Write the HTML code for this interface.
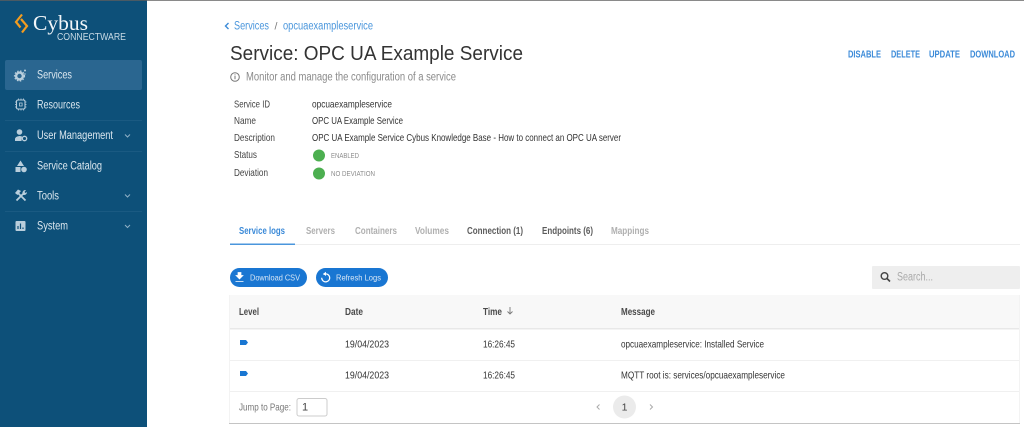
<!DOCTYPE html>
<html lang="en">
<head>
<meta charset="utf-8">
<title>Service: OPC UA Example Service</title>
<style>
html,body{margin:0;padding:0;width:1024px;height:427px;overflow:hidden;background:#fff}
svg{display:block;position:absolute;left:0;top:0;filter:blur(.3px)}
text{font-family:"Liberation Sans",sans-serif;font-size:10px}
.n{fill:#dbe7ef;font-size:11.5px}
.k{fill:#444;font-size:10.5px}
.v{fill:#333;font-size:10.5px}
.b{fill:#4a96dc;font-size:11.5px}
.a{fill:#3b8ad8;font-size:10px;font-weight:bold}
.t{font-size:10px;font-weight:bold;fill:#b0b0b0}
.d{font-size:10px;font-weight:bold;fill:#5c5c5c}
.h{font-size:10.5px;font-weight:bold;fill:#4a4a4a}
.c{fill:#d8e6f5;font-size:8.5px}
.s{fill:#8c8c8c;font-size:7.5px}
</style>
</head>
<body>
<svg width="1024" height="427" viewBox="0 0 1024 427" xmlns="http://www.w3.org/2000/svg">
<rect width="1024" height="427" fill="#fff"/>
<rect width="1024" height="1" fill="#8a8a8a"/>
<rect x="0" y="0" width="147" height="427" fill="#0d5079"/>
<rect x="0" y="0" width="147" height="1" fill="#4a5a64"/>

<!-- logo -->
<path d="M22 14.500 L16 22 L20.500 27.500" fill="none" stroke="#f39c1f" stroke-width="2.200"/>
<path d="M21 19 L27 26 L22 32.500" fill="none" stroke="#f39c1f" stroke-width="2.200"/>
<text x="33" y="30" textLength="55" lengthAdjust="spacingAndGlyphs" style="font-family:'Liberation Serif',serif;font-size:21.500px;fill:#f2f6f9">Cybus</text>
<text x="57" y="40" textLength="69" lengthAdjust="spacingAndGlyphs" style="font-size:10.500px;fill:#c9dbe6">CONNECTWARE</text>

<!-- nav -->
<rect x="5" y="60" width="137" height="30" rx="2" fill="#2a6690"/>
<rect x="5" y="120" width="137" height="1" fill="#1a5a82"/>
<rect x="5" y="151" width="137" height="1" fill="#1a5a82"/>
<rect x="5" y="211" width="137" height="1" fill="#1a5a82"/>

<!-- services icon -->
<circle cx="19.500" cy="76" r="3.400" fill="none" stroke="#b9cedc" stroke-width="2.400"/>
<circle cx="19.500" cy="76" r="5" fill="none" stroke="#b9cedc" stroke-width="1.200" stroke-dasharray="1.500 1.500"/>
<circle cx="25" cy="70.500" r="1" fill="#b9cedc"/><circle cx="25" cy="74" r=".7" fill="#b9cedc"/>
<!-- resources icon -->
<rect x="16.500" y="100" width="8.500" height="9" rx="1.500" fill="none" stroke="#b9cedc" stroke-width="1.100"/>
<rect x="19.500" y="103" width="2.600" height="3" fill="none" stroke="#b9cedc" stroke-width=".8"/>
<path d="M18.500 98.500v1.500M21 98.500v1.500M23.500 98.500v1.500M18.500 109v1.500M21 109v1.500M23.500 109v1.500M15 102h1.500M15 104.500h1.500M15 107h1.500M25 102h1.500M25 104.500h1.500M25 107h1.500" stroke="#b9cedc" stroke-width=".8"/>
<!-- user icon -->
<circle cx="19.500" cy="132" r="2.800" fill="#b9cedc"/>
<path d="M15 141v-2c0-2 3-3 5-3l2 .5-.5 4.500z" fill="#b9cedc"/>
<circle cx="24.500" cy="138.500" r="2.200" fill="none" stroke="#b9cedc" stroke-width="1.300"/>
<!-- catalog icon -->
<path d="M20.500 160.500l3.500 5.500h-7z" fill="#b9cedc"/>
<rect x="15.500" y="167" width="5" height="5" fill="#b9cedc"/>
<circle cx="24" cy="169.500" r="2.800" fill="#b9cedc"/>
<!-- tools icon -->
<path d="M16.500 200.500l8-8M25.500 200.500l-7.500-7.500" fill="none" stroke="#b9cedc" stroke-width="1.800"/>
<path d="M15 193l3-3.500 3 1.500-3.500 4zM22.500 193.500a3 3 0 0 1 3.500-3.500l-1.500 2 1 1 1.500-1a3 3 0 0 1-3.500 3z" fill="#b9cedc"/>
<!-- system icon -->
<rect x="15.500" y="221" width="10" height="10" rx="1" fill="#b9cedc"/>
<path d="M18 229v-3M20.500 229v-5.500M23 229v-1.500" stroke="#0d5079" stroke-width="1.200"/>

<text class="n" x="37" y="78.500" textLength="35" lengthAdjust="spacingAndGlyphs">Services</text>
<text class="n" x="37" y="108.500" textLength="43" lengthAdjust="spacingAndGlyphs">Resources</text>
<text class="n" x="37" y="139" textLength="76" lengthAdjust="spacingAndGlyphs">User Management</text>
<text class="n" x="37" y="169.500" textLength="65" lengthAdjust="spacingAndGlyphs">Service Catalog</text>
<text class="n" x="37" y="199.500" textLength="22" lengthAdjust="spacingAndGlyphs">Tools</text>
<text class="n" x="37" y="229.500" textLength="31" lengthAdjust="spacingAndGlyphs">System</text>
<path d="M125 134.500l2.500 2.500 2.500-2.500M125 194.500l2.500 2.500 2.500-2.500M125 225l2.500 2.500 2.500-2.500" fill="none" stroke="#8fb0c6" stroke-width="1"/>

<!-- breadcrumb -->
<path d="M228.500 23l-3 3 3 3" fill="none" stroke="#3b8ad8" stroke-width="1.400"/>
<text class="b" x="234" y="29.500" textLength="35" lengthAdjust="spacingAndGlyphs">Services</text>
<text x="274.500" y="29.500" style="fill:#777;font-size:10.500px">/</text>
<text class="b" x="283" y="29.500" textLength="90" lengthAdjust="spacingAndGlyphs">opcuaexampleservice</text>

<!-- title -->
<text x="230" y="60" textLength="293" lengthAdjust="spacingAndGlyphs" style="font-size:20.500px;fill:#333">Service: OPC UA Example Service</text>
<circle cx="235" cy="77" r="4.300" fill="none" stroke="#777" stroke-width="1"/>
<rect x="234.500" y="76" width="1" height="3.200" fill="#777"/><rect x="234.500" y="74.400" width="1" height="1" fill="#777"/>
<text x="246" y="80.500" textLength="210" lengthAdjust="spacingAndGlyphs" style="font-size:11.500px;fill:#8a8a8a">Monitor and manage the configuration of a service</text>

<!-- actions -->
<text class="a" x="848" y="57.500" textLength="33" lengthAdjust="spacingAndGlyphs">DISABLE</text>
<text class="a" x="891" y="57.500" textLength="29" lengthAdjust="spacingAndGlyphs">DELETE</text>
<text class="a" x="929" y="57.500" textLength="31" lengthAdjust="spacingAndGlyphs">UPDATE</text>
<text class="a" x="970" y="57.500" textLength="45" lengthAdjust="spacingAndGlyphs">DOWNLOAD</text>

<!-- details -->
<text class="k" x="234" y="107.500" textLength="36" lengthAdjust="spacingAndGlyphs">Service ID</text>
<text class="k" x="234" y="124" textLength="22" lengthAdjust="spacingAndGlyphs">Name</text>
<text class="k" x="234" y="141" textLength="41" lengthAdjust="spacingAndGlyphs">Description</text>
<text class="k" x="234" y="158" textLength="23" lengthAdjust="spacingAndGlyphs">Status</text>
<text class="k" x="234" y="176" textLength="34" lengthAdjust="spacingAndGlyphs">Deviation</text>
<text class="v" x="312" y="107.500" textLength="80" lengthAdjust="spacingAndGlyphs">opcuaexampleservice</text>
<text class="v" x="312" y="124" textLength="91" lengthAdjust="spacingAndGlyphs">OPC UA Example Service</text>
<text class="v" x="312" y="141" textLength="309" lengthAdjust="spacingAndGlyphs">OPC UA Example Service Cybus Knowledge Base - How to connect an OPC UA server</text>
<circle cx="319" cy="155.500" r="6" fill="#4caf50"/>
<circle cx="319" cy="173.500" r="6" fill="#4caf50"/>
<text class="s" x="331" y="158" textLength="28" lengthAdjust="spacingAndGlyphs">ENABLED</text>
<text class="s" x="331" y="176" textLength="44" lengthAdjust="spacingAndGlyphs">NO DEVIATION</text>

<!-- tabs -->
<text class="t" x="239" y="234" textLength="46" lengthAdjust="spacingAndGlyphs" style="fill:#3b8ad8">Service logs</text>
<text class="t" x="306" y="234" textLength="29" lengthAdjust="spacingAndGlyphs">Servers</text>
<text class="t" x="355" y="234" textLength="42" lengthAdjust="spacingAndGlyphs">Containers</text>
<text class="t" x="415" y="234" textLength="34" lengthAdjust="spacingAndGlyphs">Volumes</text>
<text class="d" x="467" y="234" textLength="56" lengthAdjust="spacingAndGlyphs">Connection (1)</text>
<text class="d" x="542" y="234" textLength="51" lengthAdjust="spacingAndGlyphs">Endpoints (6)</text>
<text class="t" x="611" y="234" textLength="38" lengthAdjust="spacingAndGlyphs">Mappings</text>
<rect x="230" y="244" width="790" height="1" fill="#eee"/>
<rect x="230" y="243.500" width="65" height="1.500" fill="#4a96dc"/>

<!-- buttons -->
<rect x="230" y="268" width="77" height="19" rx="9.500" fill="#1976d2"/>
<rect x="316" y="268" width="72" height="19" rx="9.500" fill="#1976d2"/>
<path d="M238 272.500h3v3h2l-3.500 3.500-3.500-3.500h2zM235.500 281.500h8" fill="#fff" stroke="#fff" stroke-width=".7"/>
<text class="c" x="250" y="280.500" textLength="50" lengthAdjust="spacingAndGlyphs">Download CSV</text>
<path d="M323.500 274.500a4 4 0 1 1-1.800 3.300" fill="none" stroke="#fff" stroke-width="1.200"/>
<path d="M326 271.800v4.200l-3-2.100z" fill="#fff"/>
<text class="c" x="336" y="280.500" textLength="45" lengthAdjust="spacingAndGlyphs">Refresh Logs</text>

<!-- search -->
<rect x="872" y="266" width="148" height="23" rx="1" fill="#eee"/>
<circle cx="884.500" cy="276" r="3.300" fill="none" stroke="#444" stroke-width="1.400"/>
<path d="M887 278.500l3 3" stroke="#444" stroke-width="1.600"/>
<text x="897" y="280.500" textLength="36" lengthAdjust="spacingAndGlyphs" style="font-size:11.500px;fill:#aaa">Search...</text>

<!-- table -->
<rect x="229" y="295" width="791" height="128.500" fill="#fff"/>
<rect x="229" y="295" width="791" height="33" fill="#f8f8f8"/>
<rect x="229" y="328" width="791" height="1.500" fill="#e8e8e8"/>
<rect x="229" y="360" width="791" height="1" fill="#f0f0f0"/>
<rect x="229" y="391" width="791" height="1" fill="#f0f0f0"/>
<rect x="229" y="423" width="791" height="1" fill="#c4c4c4"/>
<rect x="229" y="295" width="1" height="128" fill="#f3f3f3"/>
<rect x="1019" y="295" width="1" height="128" fill="#f3f3f3"/>

<text class="h" x="239" y="315" textLength="20" lengthAdjust="spacingAndGlyphs">Level</text>
<text class="h" x="345" y="315" textLength="18" lengthAdjust="spacingAndGlyphs">Date</text>
<text class="h" x="483" y="315" textLength="19" lengthAdjust="spacingAndGlyphs">Time</text>
<text class="h" x="621" y="315" textLength="34" lengthAdjust="spacingAndGlyphs">Message</text>
<path d="M510 307v7M507.500 311.500l2.500 2.500 2.500-2.500" fill="none" stroke="#777" stroke-width=".9"/>

<path d="M240 340h6l2 2.500-2 2.500h-6z" fill="#1976d2"/>
<path d="M240 371h6l2 2.500-2 2.500h-6z" fill="#1976d2"/>
<text class="v" x="345" y="347.500" textLength="44" lengthAdjust="spacingAndGlyphs">19/04/2023</text>
<text class="v" x="483" y="347.500" textLength="32" lengthAdjust="spacingAndGlyphs">16:26:45</text>
<text class="v" x="621" y="347.500" textLength="143" lengthAdjust="spacingAndGlyphs">opcuaexampleservice: Installed Service</text>
<text class="v" x="345" y="378.500" textLength="44" lengthAdjust="spacingAndGlyphs">19/04/2023</text>
<text class="v" x="483" y="378.500" textLength="32" lengthAdjust="spacingAndGlyphs">16:26:45</text>
<text class="v" x="621" y="378.500" textLength="164" lengthAdjust="spacingAndGlyphs">MQTT root is: services/opcuaexampleservice</text>

<!-- footer -->
<text x="239" y="410.500" textLength="52" lengthAdjust="spacingAndGlyphs" style="font-size:10.500px;fill:#777">Jump to Page:</text>
<rect x="297" y="398.500" width="30" height="17.500" rx="2" fill="#fff" stroke="#ccc"/>
<text x="302" y="410.500" style="font-size:11px;fill:#444">1</text>
<path d="M599.500 404.500l-2.500 2.500 2.500 2.500" fill="none" stroke="#aaa" stroke-width="1"/>
<circle cx="624.500" cy="407" r="11.500" fill="#ebebeb"/>
<text x="624.500" y="410.500" text-anchor="middle" style="font-size:10.500px;fill:#444">1</text>
<path d="M650 404.500l2.500 2.500-2.500 2.500" fill="none" stroke="#aaa" stroke-width="1"/>
</svg>
</body>
</html>
